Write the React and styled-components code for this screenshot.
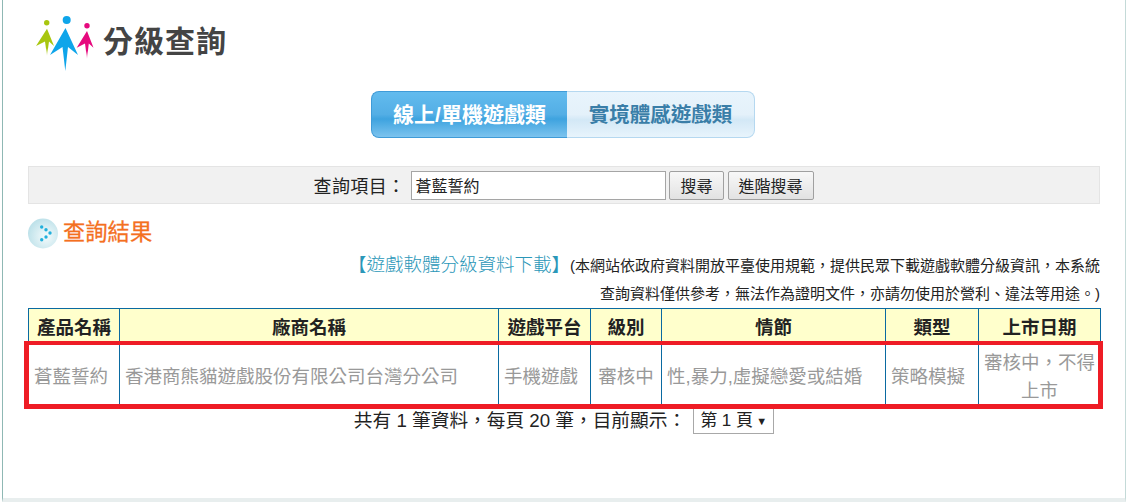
import React from 'react';
import styled, { createGlobalStyle } from 'styled-components';

const GlobalStyle = createGlobalStyle`
  html, body {
    margin: 0;
    padding: 0;
    background: #fff;
  }
  body {
    font-family: "Liberation Sans", "Noto Sans CJK TC", sans-serif;
    color: #222;
  }
`;

const Page = styled.div`
  box-sizing: border-box;
  width: 1124px;
  height: 502px;
  margin-left: 2px;
  padding: 0 25px;
  border-left: 1px solid #8fb8b4;
  border-right: 1px solid #c4dad8;
  border-bottom: 4px solid #e8eeee;
  overflow: hidden;
`;

const Logo = styled.div`
  box-sizing: border-box;
  display: flex;
  align-items: flex-start;
  gap: 9px;
  height: 91px;
  padding: 14px 0 0 8px;
`;

const LogoTitle = styled.h1`
  margin: 10px 0 0;
  font-size: 30px;
  line-height: 36px;
  font-weight: 700;
  color: #444;
  letter-spacing: 1px;
`;

const Tabs = styled.div`
  display: flex;
  width: 384px;
  height: 47px;
  margin: 0 0 28px 343px;
`;

const Tab = styled.div`
  box-sizing: border-box;
  display: flex;
  align-items: center;
  justify-content: center;
  width: ${(p) => (p.$active ? '196px' : '188px')};
  padding-bottom: 3px;
  font-size: ${(p) => (p.$active ? '21px' : '20.5px')};
  font-weight: 700;
  border: 1px solid ${(p) => (p.$active ? '#3f9bd8' : '#b5d8f0')};
  ${(p) => (p.$active ? 'border-right: 0;' : 'border-left: 0;')}
  border-radius: ${(p) => (p.$active ? '8px 0 0 8px' : '0 8px 8px 0')};
  color: ${(p) => (p.$active ? '#fff' : '#3a7ea8')};
  background: ${(p) =>
    p.$active
      ? 'linear-gradient(#62bbee 0%, #53aee5 50%, #3ea3df 60%, #7cc3ee 100%)'
      : 'linear-gradient(#e8f4fc 0%, #e4f1fa 50%, #d3e8f6 62%, #e8f4fc 100%)'};
`;

const SearchBar = styled.form`
  box-sizing: border-box;
  display: flex;
  align-items: center;
  justify-content: center;
  gap: 3px;
  height: 38px;
  background: #f1f1f1;
  border: 1px solid #e4e4e4;
  font-size: 18px;
  color: #222;
`;

const SearchLabel = styled.label`
  margin-right: 3px;
  letter-spacing: 0.4px;
`;

const SearchInput = styled.input`
  box-sizing: border-box;
  width: 255px;
  height: 29px;
  padding: 0 3px;
  border: 1px solid #a5a5a5;
  background: #fff;
  font: 16px "Liberation Sans", "Noto Sans CJK TC", sans-serif;
  color: #222;
  outline: none;
`;

const SearchButton = styled.button`
  box-sizing: border-box;
  height: 29px;
  margin-right: 1px;
  padding: 0 10px;
  border: 1px solid #a0a0a0;
  border-radius: 2px;
  background: linear-gradient(#f8f8f8, #e2e2e2);
  font: 16px "Liberation Sans", "Noto Sans CJK TC", sans-serif;
  color: #222;
`;

const ResultTitle = styled.h2`
  display: flex;
  align-items: center;
  gap: 5px;
  height: 30px;
  margin: 14px 0 3px;
  font-size: 22.3px;
  line-height: 30px;
  font-weight: 400;
  color: #f4701f;
  -webkit-text-stroke: 0.3px #f4701f;
`;

const Notice = styled.div`
  text-align: right;
  font-size: 15px;
  line-height: 28px;
  color: #222;
`;

const DownloadLink = styled.a`
  font-size: 18.5px;
  font-weight: 300;
  color: #2b97b8;
  text-decoration: none;
`;

const TableWrap = styled.div`
  position: relative;
`;

const Table = styled.table`
  width: 100%;
  border-collapse: collapse;
  table-layout: fixed;
  font-size: 18.5px;
`;

const HeadCell = styled.th`
  height: 33px;
  padding: 0 0 2px;
  border: 1px solid #0a6aa1;
  background: #ffffcc;
  font-weight: 700;
  color: #222;
`;

const Cell = styled.td`
  height: 61px;
  padding: 1px 2px 0 ${(p) => (p.$center ? '2px' : '5px')};
  border: 1px solid #0a6aa1;
  text-align: ${(p) => (p.$center ? 'center' : 'left')};
  line-height: 28px;
  color: #999;
  white-space: ${(p) => (p.$wrap ? 'normal' : 'nowrap')};
`;

const RedOutline = styled.div`
  position: absolute;
  left: -4px;
  right: -3px;
  top: 33px;
  height: 68px;
  box-sizing: border-box;
  border-style: solid;
  border-color: #ee1c25;
  border-width: 4px 5px 5px;
  pointer-events: none;
`;

const Pager = styled.div`
  display: flex;
  align-items: center;
  justify-content: center;
  margin-top: 0;
  font-size: 18.7px;
  line-height: 26px;
  color: #222;
`;

const PageSelect = styled.div`
  box-sizing: border-box;
  display: flex;
  align-items: center;
  justify-content: space-between;
  width: 81px;
  height: 26px;
  margin-left: 7px;
  padding: 0 6px;
  border: 1px solid #a8a8a8;
  font-size: 17px;
`;

const Caret = styled.span`
  font-size: 11px;
`;

const LogoMark = () => (
  <svg width="58" height="58" viewBox="0 0 58 58">
    <defs>
      <linearGradient id="green" x1="0" y1="0" x2="0" y2="1">
        <stop offset="0.7" stopColor="#a8c60f" />
        <stop offset="1" stopColor="#a8c60f" stopOpacity="0.2" />
      </linearGradient>
      <linearGradient id="pink" x1="0" y1="0" x2="0" y2="1">
        <stop offset="0.7" stopColor="#e6097e" />
        <stop offset="1" stopColor="#e6097e" stopOpacity="0.2" />
      </linearGradient>
    </defs>
    <circle cx="10.7" cy="8.7" r="2.7" fill="#a8c60f" />
    <path d="M11 14.7 L18 32 L13 27.5 L11 42 L9 27.5 L0 32 Z" fill="url(#green)" />
    <circle cx="30.7" cy="6" r="4" fill="#0ea5ea" />
    <path d="M29.5 14 L42 41 L32 33 L29.3 57 L26.5 33 L14 41 Z" fill="#0ea5ea" />
    <circle cx="51" cy="11.7" r="2.7" fill="#e6097e" />
    <path d="M51 17 L57.5 33.7 L52.8 29.5 L51 45 L49 29.5 L40.7 33.7 Z" fill="url(#pink)" />
  </svg>
);

const TitleIcon = () => (
  <svg width="30" height="31" viewBox="0 0 30 31">
    <defs>
      <radialGradient id="bubble" cx="0.6" cy="0.6" r="0.6">
        <stop offset="0" stopColor="#f5fbfc" />
        <stop offset="1" stopColor="#bfe2ea" />
      </radialGradient>
    </defs>
    <circle cx="15" cy="15.5" r="15" fill="url(#bubble)" />
    <circle cx="13.7" cy="9" r="1.7" fill="#22b0dc" />
    <circle cx="18" cy="11.7" r="1.7" fill="#22b0dc" />
    <circle cx="22" cy="15" r="1.7" fill="#22b0dc" />
    <circle cx="18" cy="19" r="1.7" fill="#22b0dc" />
    <circle cx="13.7" cy="21.7" r="1.7" fill="#22b0dc" />
  </svg>
);

const columns = [
  { title: '產品名稱', width: 91, value: '蒼藍誓約' },
  { title: '廠商名稱', width: 379, value: '香港商熊貓遊戲股份有限公司台灣分公司' },
  { title: '遊戲平台', width: 92, value: '手機遊戲' },
  { title: '級別', width: 71, value: '審核中', center: true },
  { title: '情節', width: 224, value: '性,暴力,虛擬戀愛或結婚' },
  { title: '類型', width: 93, value: '策略模擬' },
  { title: '上市日期', width: 122, value: '審核中，不得上市', center: true, wrap: true },
];

const App = () => (
  <>
    <GlobalStyle />
    <Page>
      <Logo>
        <LogoMark />
        <LogoTitle>分級查詢</LogoTitle>
      </Logo>
      <Tabs>
        <Tab $active>線上/單機遊戲類</Tab>
        <Tab>實境體感遊戲類</Tab>
      </Tabs>
      <SearchBar>
        <SearchLabel>查詢項目：</SearchLabel>
        <SearchInput defaultValue="蒼藍誓約" />
        <SearchButton type="button">搜尋</SearchButton>
        <SearchButton type="button">進階搜尋</SearchButton>
      </SearchBar>
      <ResultTitle>
        <TitleIcon />
        查詢結果
      </ResultTitle>
      <Notice>
        <DownloadLink href="#">【遊戲軟體分級資料下載】</DownloadLink>
        (本網站依政府資料開放平臺使用規範，提供民眾下載遊戲軟體分級資訊，本系統
        <br />
        查詢資料僅供參考，無法作為證明文件，亦請勿使用於營利、違法等用途。)
      </Notice>
      <TableWrap>
        <Table>
          <colgroup>
            {columns.map((col) => (
              <col key={col.title} style={{ width: col.width }} />
            ))}
          </colgroup>
          <thead>
            <tr>
              {columns.map((col) => (
                <HeadCell key={col.title}>{col.title}</HeadCell>
              ))}
            </tr>
          </thead>
          <tbody>
            <tr>
              {columns.map((col) => (
                <Cell key={col.title} $wrap={col.wrap} $center={col.center}>
                  {col.value}
                </Cell>
              ))}
            </tr>
          </tbody>
        </Table>
        <RedOutline />
      </TableWrap>
      <Pager>
        共有 1 筆資料，每頁 20 筆，目前顯示：
        <PageSelect>
          第 1 頁<Caret>▼</Caret>
        </PageSelect>
      </Pager>
    </Page>
  </>
);

export default App;
